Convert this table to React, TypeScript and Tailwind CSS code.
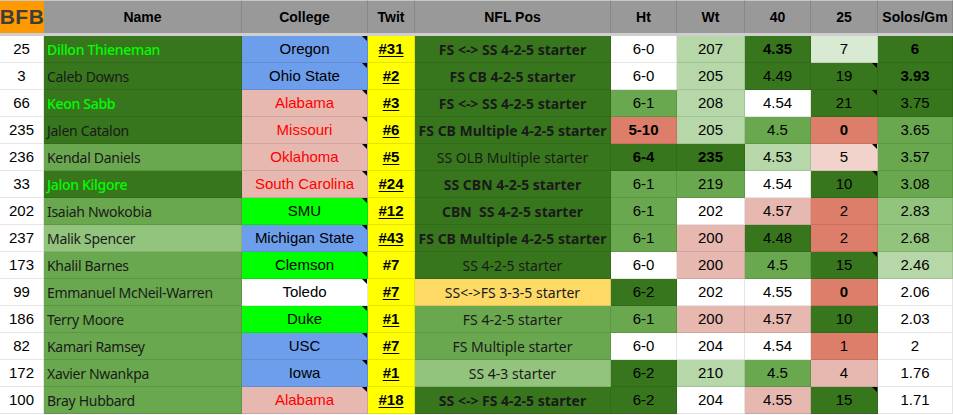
import React from "react";

const DG = "bg-[#38761d]";
const MG = "bg-[#6aa84f]";
const LG = "bg-[#93c47d]";
const LLG = "bg-[#b6d7a8]";
const VLG = "bg-[#d9ead3]";
const SAL = "bg-[#dd7e6b]";
const PNK = "bg-[#e6b8af]";
const VPK = "bg-[#f2d3cc]";
const WH = "bg-white";
const BLUE = "bg-[#6d9eeb]";
const LIME = "bg-[#00ff00]";
const RED = "bg-[#e6b8af]";

type Stat = { t: string; bg: string; b?: boolean; tri?: boolean };

type Row = {
    rank: string;
    name: string;
    nameBg: string;
    star?: boolean;
    college: string;
    collegeBg: string;
    collegeRed?: boolean;
    twit: string;
    link?: boolean;
    pos: string;
    posBg: string;
    posBold?: boolean;
    stats: Stat[];
};

const rows: Row[] = [
    { rank: "25", name: "Dillon Thieneman", nameBg: DG, star: true, college: "Oregon", collegeBg: BLUE, twit: "#31", link: true, pos: "FS <-> SS 4-2-5 starter", posBg: DG, posBold: true,
        stats: [{ t: "6-0", bg: WH }, { t: "207", bg: LLG }, { t: "4.35", bg: DG, b: true }, { t: "7", bg: VLG }, { t: "6", bg: DG, b: true }] },
    { rank: "3", name: "Caleb Downs", nameBg: DG, college: "Ohio State", collegeBg: BLUE, twit: "#2", link: true, pos: "FS CB 4-2-5 starter", posBg: DG, posBold: true,
        stats: [{ t: "6-0", bg: WH }, { t: "205", bg: LLG }, { t: "4.49", bg: DG }, { t: "19", bg: DG, tri: true }, { t: "3.93", bg: DG, b: true }] },
    { rank: "66", name: "Keon Sabb", nameBg: DG, star: true, college: "Alabama", collegeBg: RED, collegeRed: true, twit: "#3", link: true, pos: "FS <-> SS 4-2-5 starter", posBg: DG, posBold: true,
        stats: [{ t: "6-1", bg: MG }, { t: "208", bg: LLG }, { t: "4.54", bg: WH }, { t: "21", bg: DG, tri: true }, { t: "3.75", bg: DG }] },
    { rank: "235", name: "Jalen Catalon", nameBg: DG, college: "Missouri", collegeBg: RED, collegeRed: true, twit: "#6", link: true, pos: "FS CB Multiple 4-2-5 starter", posBg: DG, posBold: true,
        stats: [{ t: "5-10", bg: SAL, b: true }, { t: "205", bg: LLG }, { t: "4.5", bg: MG }, { t: "0", bg: SAL, b: true }, { t: "3.65", bg: MG }] },
    { rank: "236", name: "Kendal Daniels", nameBg: MG, college: "Oklahoma", collegeBg: RED, collegeRed: true, twit: "#5", link: true, pos: "SS OLB Multiple starter", posBg: DG,
        stats: [{ t: "6-4", bg: DG, b: true }, { t: "235", bg: DG, b: true }, { t: "4.53", bg: LLG }, { t: "5", bg: VPK, tri: true }, { t: "3.57", bg: MG }] },
    { rank: "33", name: "Jalon Kilgore", nameBg: DG, star: true, college: "South Carolina", collegeBg: RED, collegeRed: true, twit: "#24", link: true, pos: "SS CBN 4-2-5 starter", posBg: DG, posBold: true,
        stats: [{ t: "6-1", bg: MG }, { t: "219", bg: MG }, { t: "4.54", bg: WH }, { t: "10", bg: DG, tri: true }, { t: "3.08", bg: MG }] },
    { rank: "202", name: "Isaiah Nwokobia", nameBg: MG, college: "SMU", collegeBg: LIME, twit: "#12", link: true, pos: "CBN\u00a0 SS 4-2-5 starter", posBg: DG, posBold: true,
        stats: [{ t: "6-1", bg: MG }, { t: "202", bg: WH }, { t: "4.57", bg: PNK }, { t: "2", bg: SAL }, { t: "2.83", bg: LG }] },
    { rank: "237", name: "Malik Spencer", nameBg: LG, college: "Michigan State", collegeBg: BLUE, twit: "#43", link: true, pos: "FS CB Multiple 4-2-5 starter", posBg: DG, posBold: true,
        stats: [{ t: "6-1", bg: MG }, { t: "200", bg: PNK }, { t: "4.48", bg: DG }, { t: "2", bg: SAL }, { t: "2.68", bg: LG }] },
    { rank: "173", name: "Khalil Barnes", nameBg: MG, college: "Clemson", collegeBg: LIME, twit: "#7", pos: "SS 4-2-5 starter", posBg: DG,
        stats: [{ t: "6-0", bg: WH }, { t: "200", bg: PNK }, { t: "4.5", bg: MG }, { t: "15", bg: DG, tri: true }, { t: "2.46", bg: LLG }] },
    { rank: "99", name: "Emmanuel McNeil-Warren", nameBg: MG, college: "Toledo", collegeBg: WH, twit: "#7", link: true, pos: "SS<->FS 3-3-5 starter", posBg: "bg-[#ffd966]",
        stats: [{ t: "6-2", bg: DG }, { t: "202", bg: WH }, { t: "4.55", bg: WH }, { t: "0", bg: SAL, b: true }, { t: "2.06", bg: WH }] },
    { rank: "186", name: "Terry Moore", nameBg: MG, college: "Duke", collegeBg: LIME, twit: "#1", link: true, pos: "FS 4-2-5 starter", posBg: MG,
        stats: [{ t: "6-1", bg: MG }, { t: "200", bg: PNK }, { t: "4.57", bg: PNK }, { t: "10", bg: DG }, { t: "2.03", bg: WH }] },
    { rank: "82", name: "Kamari Ramsey", nameBg: MG, college: "USC", collegeBg: BLUE, twit: "#7", link: true, pos: "FS Multiple starter", posBg: MG,
        stats: [{ t: "6-0", bg: WH }, { t: "204", bg: WH }, { t: "4.54", bg: WH }, { t: "1", bg: SAL }, { t: "2", bg: WH }] },
    { rank: "172", name: "Xavier Nwankpa", nameBg: MG, college: "Iowa", collegeBg: BLUE, twit: "#1", link: true, pos: "SS 4-3 starter", posBg: LG,
        stats: [{ t: "6-2", bg: DG }, { t: "210", bg: LLG }, { t: "4.5", bg: MG }, { t: "4", bg: PNK }, { t: "1.76", bg: WH }] },
    { rank: "100", name: "Bray Hubbard", nameBg: MG, college: "Alabama", collegeBg: RED, collegeRed: true, twit: "#18", link: true, pos: "SS <-> FS 4-2-5 starter", posBg: DG, posBold: true,
        stats: [{ t: "6-2", bg: DG }, { t: "204", bg: WH }, { t: "4.55", bg: PNK }, { t: "15", bg: DG, tri: true }, { t: "1.71", bg: WH }] },
];

const headers = ["Name", "College", "Twit", "NFL Pos", "Ht", "Wt", "40", "25", "Solos/Gm"];

const arial = "font-['Liberation_Sans',Arial,sans-serif]";
const ubuntu = "font-['Noto_Sans',sans-serif]";
const cell = "relative h-[27px] border-b border-r border-black/10 flex items-center overflow-hidden whitespace-nowrap";

// comment marker in the top-right corner of a cell
function Corner() {
    return <span className="absolute top-0 right-0 w-0 h-0 border-t-[5px] border-l-[5px] border-t-black border-l-transparent" />;
}

export default function App() {
    return (
        <div className="w-[953px] h-[415px] overflow-hidden bg-white text-black">
            <div className="grid grid-cols-[44px_198px_126px_47px_196px_66px_68px_66px_67px_75px]">
                <div className={`h-[33px] bg-[#ff9900] border-t border-[#c8c8c8] flex items-center justify-center ${arial} text-[21px] font-bold text-[#3d3d3d] tracking-[0.5px]`}>
                    BFB
                </div>
                {headers.map((h) => (
                    <div key={h} className={`h-[33px] bg-[#999999] border-t border-r border-t-[#c8c8c8] border-r-[#888888] flex items-center justify-center ${arial} text-[14px] font-bold`}>
                        {h}
                    </div>
                ))}
                <div className="col-span-10 h-[3px] bg-[#cfcfcf]" />

                {rows.map((r) => (
                    <React.Fragment key={r.rank + r.name}>
                        <div className={`${cell} justify-center bg-white ${arial} text-[15px]`}>{r.rank}</div>
                        <div className={`${cell} ${r.nameBg} pl-[3px] ${ubuntu} text-[14px] tracking-[-0.3px] ${r.star ? "text-[#00ff00] font-medium" : "text-[#1a1a1a]"}`}>
                            {r.name}
                        </div>
                        <div className={`${cell} ${r.collegeBg} justify-center ${arial} text-[15px] ${r.collegeRed ? "text-[#ff0000]" : "text-black"}`}>
                            {r.college}
                            <Corner />
                        </div>
                        <div className={`${cell} bg-[#ffff00] justify-center ${arial} text-[15px] font-bold ${r.link ? "underline underline-offset-2" : ""}`}>
                            {r.twit}
                        </div>
                        <div className={`${cell} ${r.posBg} justify-center ${ubuntu} text-[14px] text-[#1a1a1a] ${r.posBold ? "font-bold" : ""}`}>
                            {r.pos}
                        </div>
                        {r.stats.map((s, i) => (
                            <div key={i} className={`${cell} ${s.bg} justify-center ${arial} text-[15px] ${s.b ? "font-bold" : ""}`}>
                                {s.t}
                                {s.tri ? <Corner /> : null}
                            </div>
                        ))}
                    </React.Fragment>
                ))}
            </div>
        </div>
    );
}
